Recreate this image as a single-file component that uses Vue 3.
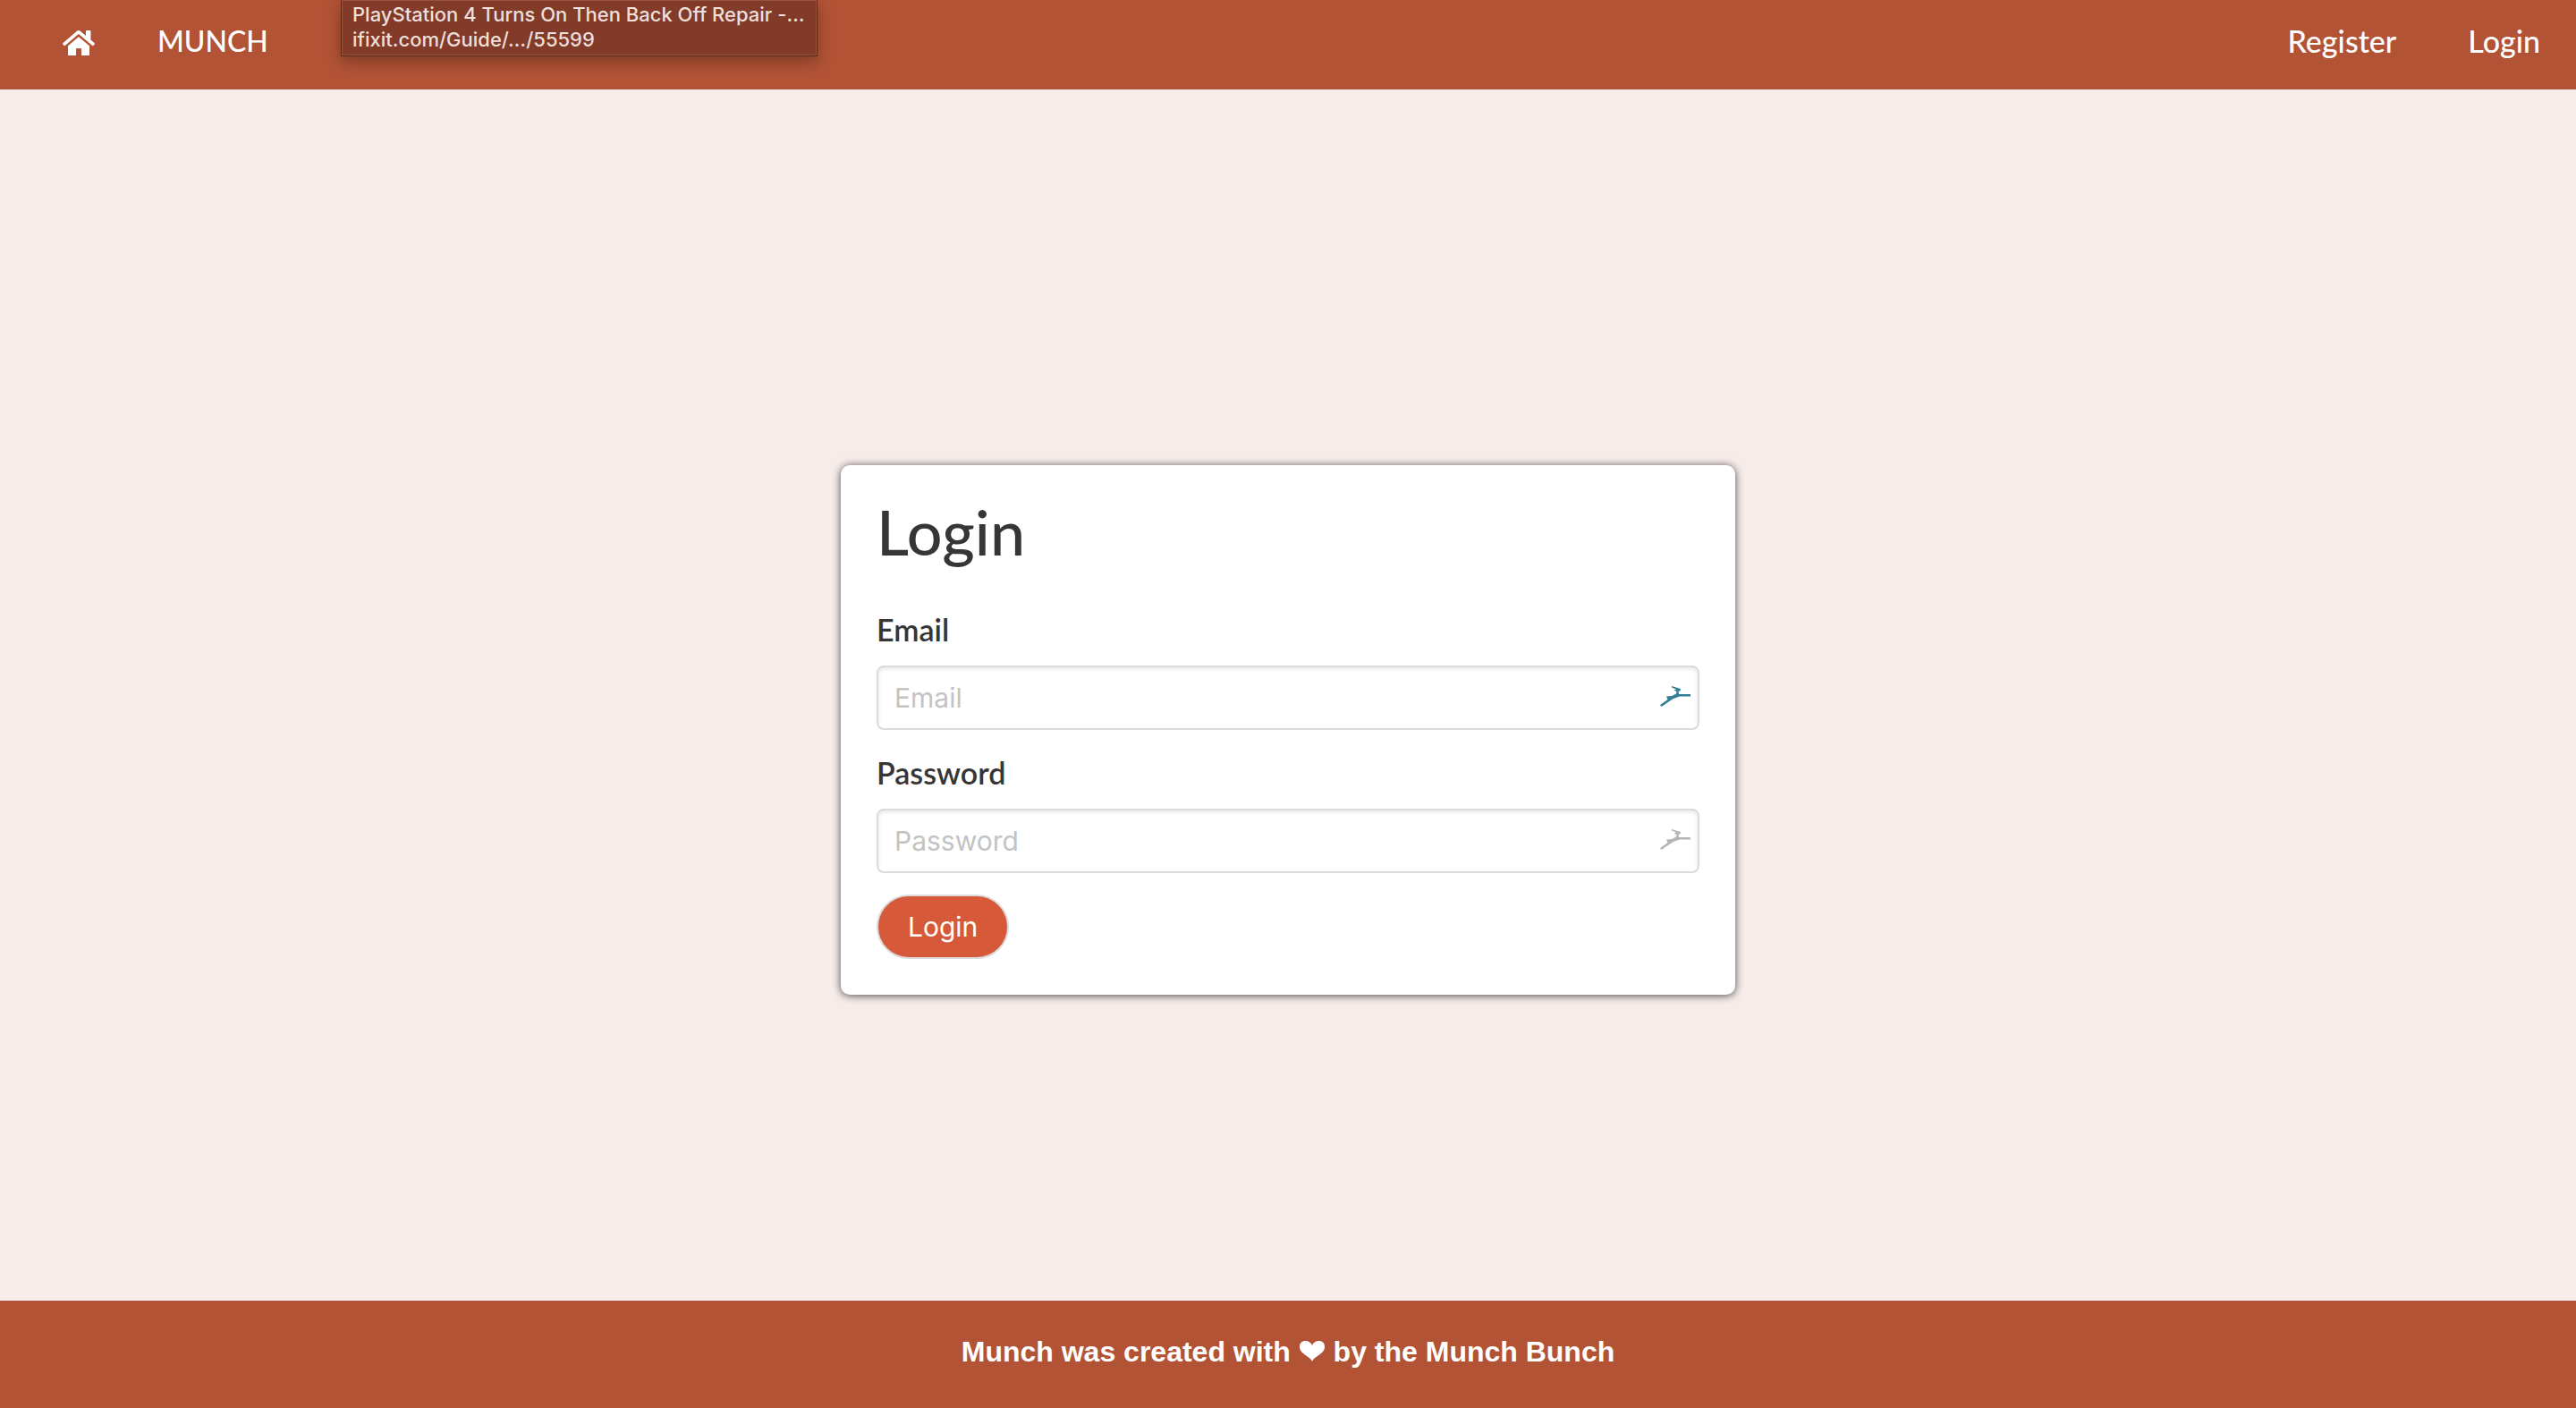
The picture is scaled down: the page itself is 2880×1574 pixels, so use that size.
<script setup>
import { ref } from 'vue'

const email = ref('')
const password = ref('')
</script>

<template>
  <div class="page">
    <header class="navbar">
      <nav class="nav-group">
        <a href="#" class="home" aria-label="Home">
          <svg width="36" height="28" viewBox="0 0 36 28" fill="#fff">
            <path d="M17.9 0c.7 0 1.300.2 1.900.7L26 5.900V1.200C26 .4 26.400 0 27.200 0h3.100c.7 0 1.100.4 1.100 1.200v9.300l4 3.400c.6.500.7 1 .2 1.600l-1 1.200c-.5.600-1 .6-1.600.1L18.600 4.600c-.5-.4-.9-.4-1.400 0L3 16.800c-.6.500-1.100.5-1.600-.1l-1-1.200c-.5-.6-.4-1.100.2-1.600L16 .7c.6-.5 1.200-.7 1.900-.7z" />
            <path d="M17.900 7.200L30 17.200v9.700c0 .7-.4 1.100-1.100 1.100H21v-6.900c0-.7-.4-1.100-1.100-1.100h-3.800c-.7 0-1.100.4-1.100 1.100V28H7.100C6.400 28 6 27.600 6 26.900v-9.700z" />
          </svg>
        </a>
        <a href="#" class="brand">MUNCH</a>
      </nav>
      <nav class="nav-group">
        <a href="#">Register</a>
        <a href="#">Login</a>
      </nav>
      <div class="tooltip" role="tooltip">
        <div>PlayStation 4 Turns On Then Back Off Repair -…</div>
        <div>ifixit.com/Guide/…/55599</div>
      </div>
    </header>

    <main class="content">
      <form class="card" @submit.prevent>
        <h1>Login</h1>
        <label for="email">Email</label>
        <div class="control">
          <input id="email" v-model="email" type="email" placeholder="Email" />
          <svg class="mark" width="34" height="24" viewBox="0 0 34 24" fill="#337d96">
            <path d="M0 21L8.500 15 7 11.500 13 11 18 8.500 18.500 6 15.500 4.500 18 3.500 13 1.500V0L23 3 22.500 5.200 20.500 6 21 9 34 9V11.500L22 11.500Q16 13 11 16.500L1.500 23Z" />
          </svg>
        </div>
        <label for="password">Password</label>
        <div class="control">
          <input id="password" v-model="password" type="password" placeholder="Password" />
          <svg class="mark" width="34" height="24" viewBox="0 0 34 24" fill="#b5b5b5">
            <path d="M0 21L8.500 15 7 11.500 13 11 18 8.500 18.500 6 15.500 4.500 18 3.500 13 1.500V0L23 3 22.500 5.200 20.500 6 21 9 34 9V11.500L22 11.500Q16 13 11 16.500L1.500 23Z" />
          </svg>
        </div>
        <button type="submit">Login</button>
      </form>
    </main>

    <footer class="footer">
      <p>
        Munch was created with
        <svg class="heart" width="30" height="24" viewBox="0 0 30 24" fill="#fff" role="img" aria-label="love">
          <path d="M15 24C13 18 1 16 1 7.500 1 3 4 1 7.500 1 11 1 14 3 15 6 16 3 19 1 22.500 1 26 1 29 3 29 7.500 29 16 17 18 15 24Z" />
        </svg>
        by the Munch Bunch
      </p>
    </footer>
  </div>
</template>

<style>
body {
  background: #f6ecea;
}
</style>

<style scoped>
.page {
  display: flex;
  flex-direction: column;
  min-height: 100vh;
  font-family: Lato, sans-serif;
  color: #363636;
}
.navbar {
  position: relative;
  display: flex;
  justify-content: space-between;
  padding: 0 40px 0 70px;
  background: #b25336;
}
.nav-group {
  display: flex;
  align-items: center;
  gap: 80px;
  height: 100px;
}
.nav-group a {
  color: #fff;
  font-size: 34px;
  line-height: 48px;
  font-weight: 500;
  padding-bottom: 8px;
  text-decoration: none;
}
.nav-group:first-child {
  gap: 70px;
}
.nav-group .home {
  display: flex;
  padding-bottom: 4px;
}
.nav-group .brand {
  font-size: 32px;
}
.tooltip {
  position: absolute;
  top: 0;
  left: 381px;
  box-sizing: border-box;
  width: 533px;
  padding: 2px 12px 4px;
  border: 1px solid #55281b;
  border-top: 0;
  background: #813b28;
  box-shadow: inset 0 0 0 1px #985543, 0 6px 16px rgba(0, 0, 0, 0.3);
  color: #efdfda;
  font: 500 22px/28px Inter, sans-serif;
  white-space: nowrap;
}
.content {
  flex: 1;
  display: flex;
  align-items: center;
  justify-content: center;
  padding-top: 78px;
}
.card {
  box-sizing: border-box;
  width: 1000px;
  padding: 40px;
  border-radius: 10px;
  background: #fff;
  box-shadow: 0 1px 10px rgba(0, 0, 0, 0.7);
}
h1 {
  margin: 0 0 52px;
  font-size: 70px;
  line-height: 68px;
  font-weight: 500;
}
label {
  display: block;
  margin-bottom: 16px;
  font-size: 34px;
  line-height: 48px;
  font-weight: 600;
}
.control {
  position: relative;
  margin-bottom: 24px;
}
input {
  display: block;
  box-sizing: border-box;
  width: 100%;
  height: 72px;
  padding: 0 18px;
  border: 2px solid #dbdbdb;
  border-radius: 8px;
  background: #fff;
  box-shadow: inset 0 2px 4px rgba(10, 10, 10, 0.1);
  color: #363636;
  font: 30px/48px Inter, sans-serif;
}
input::placeholder {
  color: #c3c3c3;
}
.mark {
  position: absolute;
  right: 10px;
  top: 23px;
}
button {
  display: block;
  height: 72px;
  padding: 0 33px;
  border: 2px solid #dbdbdb;
  border-radius: 36px;
  background: #d65a3a;
  color: #fff;
  font: 30px/48px Inter, sans-serif;
}
.footer {
  padding: 33px 0 39px;
  background: #b25336;
  color: #fff;
  text-align: center;
  font: bold 32px/48px "Liberation Sans", sans-serif;
}
.footer p {
  margin: 0;
}
</style>
